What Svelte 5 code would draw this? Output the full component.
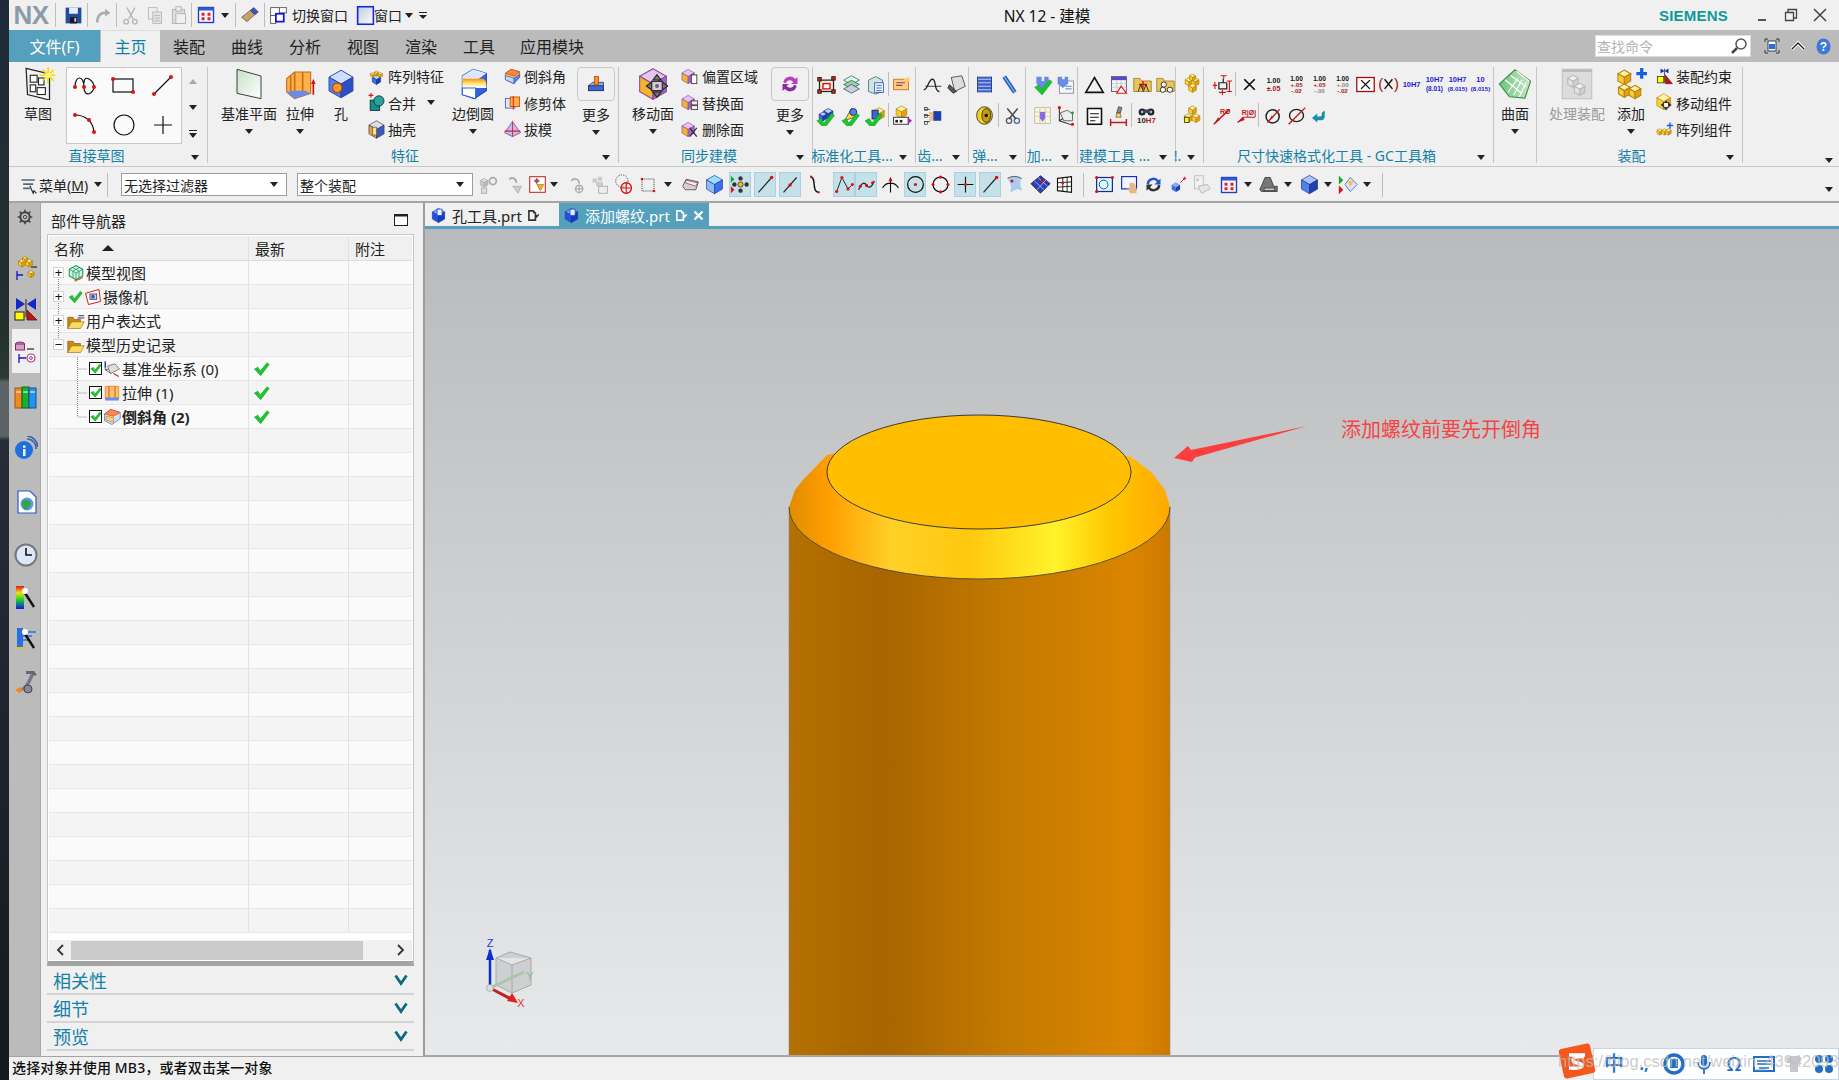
<script>
	// small svg builders for the NX icon set
	const poly = (p, f, s = 'none', w = 0.8) => `<polygon points="${p}" fill="${f}" stroke="${s}" stroke-width="${w}"/>`;
	const line = (d, s = '#111', w = 1.4) => `<path d="${d}" fill="none" stroke="${s}" stroke-width="${w}"/>`;
	const fill = (d, f) => `<path d="${d}" fill="${f}"/>`;
	const rect = (x, y, w, h, f, s = 'none', sw = 1) => `<rect x="${x}" y="${y}" width="${w}" height="${h}" fill="${f}" stroke="${s}" stroke-width="${sw}"/>`;
	const circ = (x, y, r, f, s = 'none', sw = 1) => `<circle cx="${x}" cy="${y}" r="${r}" fill="${f}" stroke="${s}" stroke-width="${sw}"/>`;
	const txt = (x, y, t, f, sz = 7, b = 700) => `<text x="${x}" y="${y}" fill="${f}" font-size="${sz}" font-weight="${b}" text-anchor="middle" font-family="Liberation Sans, sans-serif">${t}</text>`;
	const cube = (x, y, s, t, l, r, st = 'none') => {
		const a = s * 0.87, h = s / 2;
		return poly(`${x},${y - s} ${x + a},${y - h} ${x},${y} ${x - a},${y - h}`, t, st) +
			poly(`${x - a},${y - h} ${x},${y} ${x},${y + s} ${x - a},${y + h}`, l, st) +
			poly(`${x + a},${y - h} ${x},${y} ${x},${y + s} ${x + a},${y + h}`, r, st);
	};
	const yel = (x, y, s) => cube(x, y, s, '#fff2a8', '#f7cf35', '#dfa11a', '#b8860b');
	const blu = (x, y, s) => cube(x, y, s, '#bcd0ff', '#3f6fe8', '#1f3fae', '#1a2f8a');
	const pur = (x, y, s) => cube(x, y, s, '#e4c6ea', '#f5b52a', '#a565c0', '#8a4aa5');
	const chk = (x = 0, y = 0) => `<g transform="translate(${x} ${y})">${poly('3,12 8,9.500 11,14.500 20,3.500 23,6 11.500,21', '#1ec42e', '#109a22', 0.6)}</g>`;
	const dot = (x, y, r = 1.8) => circ(x, y, r, '#d81212');

	const icons = {
		sketch: poly('3,1 20,5 20,24 4,20', '#f2f2f2', '#222', 0.9) + rect(6, 6, 5, 5, '#fff', '#222', 0.8) + rect(6, 13, 4, 5, '#fff', '#222', 0.8) + rect(11, 15, 6, 5, '#fff', '#222', 0.8) + rect(12, 8, 4, 5, '#fff', '#222', 0.8) + line('M19 0v12M13 6h11M15 2l8 8M23 2l-8 8', '#f4d800', 1.2) + circ(19, 6, 2.2, '#fff46a'),
		save: rect(3, 3, 18, 18, '#234a9c') + rect(7, 3, 10, 7, '#e8eef8') + rect(8, 14, 8, 7, '#1a1a1a') + rect(13, 15, 2, 4, '#ddd'),
		undo: line('M6 20c0-8 4-12 11-11', '#a9adb0', 3) + poly('15,4 21,9 15,13', '#a9adb0'),
		cut: line('M8 3l7 13M17 3l-7 13', '#b3b6b8', 1.6) + circ(7, 19, 2.6, 'none', '#b3b6b8', 1.6) + circ(17, 19, 2.6, 'none', '#b3b6b8', 1.6),
		copy: rect(5, 3, 10, 13, '#eee', '#b3b6b8') + rect(10, 8, 10, 13, '#e2e2e2', '#b3b6b8') + line('M12 12h6M12 15h6M12 18h6', '#b3b6b8', 1),
		paste: rect(5, 5, 14, 16, '#ddd', '#aeb1b3') + rect(9, 2, 6, 5, '#eee', '#aeb1b3') + rect(9, 10, 11, 11, '#f0f0f0', '#aeb1b3'),
		grid: rect(2, 2, 20, 20, '#f5f8ff', '#1e3cc8', 1.8) + rect(2, 2, 20, 4, '#2f56d8') + rect(6, 9, 4, 4, '#e52222') + rect(14, 9, 4, 4, '#e52222') + rect(6, 15, 4, 4, '#e52222') + rect(14, 15, 4, 4, '#e52222'),
		brush: poly('3,14 13,6 18,11 9,19', '#caa06a', '#555') + poly('13,6 17,3 22,8 18,11', '#3a55c8', '#334'),
		sw: rect(3, 3, 10, 9, '#fff', '#555') + rect(13, 3, 8, 6, '#fff', '#555') + rect(3, 12, 6, 9, '#fff', '#555') + rect(9, 10, 9, 9, '#fff', '#1414d8', 2),
		win: `<defs><linearGradient id="wg" x2="1" y2="1"><stop offset="0" stop-color="#bcd"/><stop offset="1" stop-color="#fff"/></linearGradient></defs>` + rect(3, 2, 18, 20, 'url(#wg)', '#1428d8', 1.8),
		plane: `<defs><linearGradient id="pg" x2="1" y2="1"><stop offset="0" stop-color="#c6e2c6"/><stop offset="1" stop-color="#fff"/></linearGradient></defs>` + poly('3,1 21,6 21,23 3,19', 'url(#pg)', '#333', 0.7),
		extrude: poly('2,8 8,3 20,3 20,19 8,23 2,18', '#ffb24a', '#c26a10') + line('M8 3v20M14 3v18M5 6v15', '#d06a10', 1.2) + poly('2,18 8,23 20,19 16,17 6,17', '#6a8ce8') + line('M22 20v-9', '#d81212', 1.3) + poly('20.3,12 22,8 23.7,12', '#d81212'),
		hole: cube(12, 12, 11, '#cfe0ff', '#4f82f0', '#2a50c8', '#2a4ab0') + circ(9, 15, 3.8, '#ff9d1e', '#c23c10'),
		pattern: blu(12, 16, 6) + yel(7, 10, 3) + yel(12, 8, 3) + yel(17, 10, 3),
		unite: rect(4, 9, 12, 13, '#14908c', '#123') + circ(15, 10, 6.5, '#2aa29a', '#123') + line('M2 3h6M5 0v6', '#d81212', 1.4),
		shell: cube(12, 12, 11, '#dde', '#e8a040', '#3a5ac0', '#335') + rect(7, 9, 5, 10, '#f4e0a0', '#8a5a20'),
		blend: `<defs><linearGradient id="bg" y2="1" x2="0"><stop offset="0" stop-color="#ff8c00"/><stop offset=".5" stop-color="#ffe27a"/><stop offset="1" stop-color="#fff"/></linearGradient></defs>` + poly('4,6 12,1 22,4 22,17 13,23 4,20', '#2f62e0', '#1f3fae') + poly('4,6 12,1 22,4 14,10 4,10', '#dce6ff') + fill('M4 8h15c2 0 3 2 3 5v2H4z', 'url(#bg)') + poly('4,15 14,15 14,23 4,20', '#fff', '#2f62e0'),
		chamfer: poly('3,8 10,3 21,6 21,13 13,21 3,16', '#f0c060', '#c23c10') + poly('3,8 10,3 21,6 14,11', '#ff8a3c', '#c23c10') + poly('3,11 14,14 14,21 3,16', '#bcd8ff', '#2a50c8') + poly('14,14 21,9 21,13 14,21', '#5f86e8', '#2a50c8'),
		trim: rect(3, 7, 12, 12, '#dfe8ff', '#3a55c8') + rect(9, 5, 12, 12, '#ffb040', '#c23c10') + line('M13 4v17', '#d81212', 1.2),
		draft: poly('12,2 22,16 12,21 2,16', '#c7b6e8', '#5a2ca0') + line('M2 14h20', '#d81212', 1.4) + line('M12 2v19', '#d81212', 1),
		more: rect(3, 14, 18, 6, '#3a68d8', '#224') + poly('3,14 8,10 21,10 21,14', '#8aa8f0', '#224') + rect(10, 3, 5, 10, '#ff8c1e', '#a85010'),
		move: pur(12, 12, 11.5) + poly('15,5 12,9 18,9', '#777', '#222') + poly('15,22 12,18 18,18', '#777', '#222') + poly('7,13.5 11,10.5 11,16.5', '#777', '#222') + poly('23,13.5 19,10.5 19,16.5', '#777', '#222') + rect(11, 10, 8, 7, '#d0d0d0', '#333') + circ(15, 13.5, 1.5, '#8a4aa5'),
		offset: pur(9, 12, 9) + rect(13, 10, 7, 11, '#fff', '#222'),
		replace: pur(9, 12, 9) + rect(13, 10, 8, 5, '#eee', '#333') + rect(13, 16, 8, 5, '#eee', '#333'),
		del: pur(9, 12, 9) + line('M11 10l9 11M20 10l-9 11', '#333', 1.6),
		sync: fill('M4 10a8 8 0 0 1 14-4l3-2v8h-8l3-2a5 5 0 0 0-9 1z', '#b53fc0') + fill('M20 14a8 8 0 0 1-14 4l-3 2v-8h8l-3 2a5 5 0 0 0 9-1z', '#8a2ca0'),
		std1: rect(4, 7, 16, 13, '#fbe6d0', '#222', 1.4) + rect(8, 11, 8, 6, '#fff', '#d81212', 1.6) + rect(2, 4, 4, 4, '#c21', '#222') + rect(18, 3, 4, 4, '#c21', '#222') + rect(2, 18, 4, 4, '#c21', '#222') + rect(18, 18, 4, 4, '#c21', '#222'),
		std2: poly('12,2 21,7 12,12 3,7', '#dfe', '#255') + poly('12,7 21,12 12,17 3,12', '#9ca', '#255') + poly('12,12 21,17 12,22 3,17', '#ccd', '#255'),
		std3: poly('12,3 20,7 20,20 12,23 4,20 4,7', '#cfe6e0', '#2a5a5a') + rect(11, 10, 10, 11, '#f0f6ff', '#2a5ac0') + line('M13 13h6M13 16h6M13 19h6', '#2a5ac0', 1),
		std4: rect(3, 6, 17, 12, '#fc8', '#c87010') + line('M6 10h10M6 13h7', '#844', 1.2) + poly('14,6 21,3 21,9', '#ffd060'),
		std5: blu(14, 10, 6) + blu(8, 13, 5) + chk(-2, 6),
		std6: poly('4,18 12,4 20,12', '#ffd84a', '#333') + circ(14, 8, 4, '#4f82f0', '#224') + chk(-2, 6),
		std7: yel(16, 10, 7) + rect(8, 6, 7, 10, '#3a68d8', '#224') + chk(-3, 6),
		std8: yel(12, 8, 7) + rect(3, 14, 17, 8, '#fff', '#222') + rect(5, 17, 3, 3, '#222') + rect(10, 17, 3, 3, '#222') + poly('19,14 24,18 19,22', '#a020c0'),
		g1: line('M2 18c5 0 5-12 10-12s1 14 8 14', '#222', 1.5) + line('M4 14h18', '#222', 1),
		g2: poly('6,4 18,2 22,14 10,20', '#ddd', '#222') + poly('4,12 12,20 8,22 2,16', '#556', '#222'),
		g3: rect(3, 3, 3, 3, '#fff', '#333', 0.8) + rect(3, 11, 3, 3, '#fff', '#333', 0.8) + rect(3, 19, 3, 3, '#fff', '#333', 0.8) + line('M3 5h6M3 12h6M3 19h6', '#333', 1) + fill('M8 8h9c3 0 4 2 4 5s-2 5-5 5h-8z', '#f0c090') + rect(13, 7, 9, 11, '#1f3fae'),
		s1: rect(4, 3, 16, 18, '#4060c8') + line('M4 6h16M4 10h16M4 14h16M4 18h16', '#cfe0ff', 1) + line('M4 3v18M20 3v18', '#203080', 1),
		s2: line('M6 3l12 18', '#1f5fc0', 5) + line('M6 3l12 18', '#8ab0ee', 1.4),
		s3: `<ellipse cx="12" cy="12" rx="9" ry="10" fill="#f0d020" stroke="#332"/>` + `<ellipse cx="14" cy="12" rx="5" ry="8" fill="#c89c10" stroke="#332"/>` + circ(14, 12, 2, '#111'),
		s4: circ(8, 18, 3, 'none', '#556', 1.5) + circ(17, 18, 3, 'none', '#4868a8', 1.5) + line('M6 4l10 12M18 4L8 16', '#444', 1.6),
		a1: poly('5,3 11,3 11,8 14,8 14,3 19,3 19,11 12,18 5,11', '#6a8ce8') + chk(0, 3),
		a2: rect(5, 8, 16, 14, '#f6f8ff', '#889') + poly('3,3 8,3 8,6 11,6 11,3 15,3 15,11 9,16 3,11', '#6a8ce8') + line('M12 14h7M12 17h7', '#4868a8', 1),
		a3: rect(3, 3, 18, 18, '#fbf4d8', '#bba') + line('M3 8h18M3 13h18M9 3v18M15 3v18', '#ccb', 1) + poly('9,8 15,8 15,15 12,19 9,15', '#8a6ae0'),
		a4: line('M5 2v16l15 5M5 18l15-9', '#333', 1.2) + poly('6,9 14,6 20,10 20,18 10,18', '#eee', '#333') + dot(5, 3) + circ(20, 9, 1.5, '#1a1') + dot(20, 22),
		tri: poly('12,4 22,21 2,21', 'none', '#111', 1.8),
		tbl: rect(4, 3, 17, 17, '#f4f4fa', '#555') + rect(4, 3, 17, 4, '#5a4ac8') + line('M4 11h17M4 15h17M10 7v13M15 7v13', '#bbb', .8) + poly('15,14 21,22 10,22', '#fff', '#d81212', 1.4),
		fld1: poly('2,5 9,5 11,8 22,8 22,20 2,20', '#e8c55a', '#8a6a10') + line('M8 12h9M12.5 8v9', '#d81212', 1.6) + line('M7 20l3-8 3 8 3-8 3 8', '#222', 1),
		fld2: poly('2,5 9,5 11,8 22,8 22,20 2,20', '#e8c55a', '#8a6a10') + circ(10, 12, 3, '#fff', '#222') + circ(9, 18, 3, '#fff', '#222') + circ(17, 18, 3, '#fff', '#222'),
		note: rect(4, 4, 16, 18, '#fff', '#111', 1.8) + line('M7 10h10M7 14h10M7 18h6', '#111', 1.3),
		ruler: line('M3 20h18M3 16v8M21 16v8', '#c01818', 1.6) + poly('9,14 15,14 14,9 10,9', '#ffcf4a', '#664') + poly('10,9 14,9 16,3 12,2', '#889', '#334'),
		bino: circ(7, 8, 4, '#222') + circ(17, 8, 4, '#222') + rect(9, 5, 6, 4, '#444') + circ(7, 8, 1.6, '#8ab0ee') + circ(17, 8, 1.6, '#8ab0ee') + txt(12, 21, '10<tspan fill="#c01818">H7</tspan>', '#222', 9),
		stack: yel(8, 9, 5) + yel(15, 9, 5) + yel(12, 16, 5) + yel(12, 4, 4),
		stack2: yel(12, 6, 5) + yel(7, 15, 5) + yel(16, 15, 5) + rect(3, 14, 5, 6, '#ff0', '#333'),
		dim0: line('M14 5v5h4M14 10h-5v7h9v-7', '#222', 1.4) + line('M2 13h5M4.5 9v8M21 8v12M18 8h6M18 20h6M11 2h7M14.5 2v3M9 21h8M13 18v6', '#d01818', 1.3),
		x: line('M6 6l12 12M18 6L6 18', '#111', 2),
		v1: txt(12, 10, '1.00', '#111', 8) + txt(12, 19, '±.05', '#a81818', 8),
		v2: txt(12, 8, '1.00', '#111', 7.5) + txt(12, 15, '+.05', '#a81818', 7) + txt(12, 22, '-.02', '#a81818', 7),
		v3: txt(12, 8, '1.00', '#111', 7.5) + txt(12, 15, '+.05', '#a81818', 7) + txt(12, 22, '-.00', '#888', 7),
		v4: txt(12, 8, '1.00', '#111', 7.5) + txt(12, 15, '+.00', '#888', 7) + txt(12, 22, '-.02', '#a81818', 7),
		xbox: rect(2, 4, 20, 16, '#fff', '#a01010', 1.5) + line('M7 7l10 10M17 7L7 17', '#111', 1.6),
		xpar: txt(3, 17, '(', '#a01010', 17, 400) + txt(21, 17, ')', '#a01010', 17, 400) + line('M7.5 6l9 11M16.5 6l-9 11', '#111', 1.6),
		h1: txt(12, 15, '10H7', '#1c1cd0', 8.5),
		h2: txt(12, 9, '10H7', '#1c1cd0', 8.5) + txt(12, 19, '(8.01)', '#1c1cd0', 7.5),
		h3: txt(12, 9, '10H7', '#1c1cd0', 8.5) + txt(12, 19, '(8.015)', '#1c1cd0', 7),
		h4: txt(12, 9, '10', '#1c1cd0', 8.5) + txt(12, 19, '(8.015)', '#1c1cd0', 7),
		d1: line('M2 22L20 5', '#c01818', 1.6) + txt(15, 10, 'R&#216;', '#c01818', 8) + poly('2,22 9,17 7,14', '#c01818'),
		d2: line('M3 20L10 14H23', '#c01818', 1.3) + poly('3,20 9,13 11,17', '#c01818') + txt(16, 11, 'R|&#216;|', '#c01818', 8),
		d3: circ(11, 13, 7.5, 'none', '#222', 1.7) + line('M5 20L19 5', '#c01818', 1.6) + poly('7,18 12,14 10,12', '#c01818'),
		d4: `<ellipse cx="12" cy="12" rx="8" ry="7" fill="none" stroke="#222" stroke-width="1.6"/>` + line('M3 22L22 3', '#c01818', 1.6),
		back: fill('M21 6v8c0 3-2 5-5 5h-5v3l-7-6 7-6v4h4c1 0 2-1 2-2V9z', '#1790a8'),
		surf: `<defs><linearGradient id="sg" x2="1"><stop offset="0" stop-color="#6cc67c"/><stop offset="1" stop-color="#c8e6c8"/></linearGradient></defs>` + poly('1,12 12,2 23,10 19,22 8,21', 'url(#sg)', '#478a50') + line('M5 9l11 9M9 6l11 8M13 3l9 7M7 18l7-10M11 20l6-11M15 21l5-10', '#fff', .8),
		proc: rect(1, 1, 22, 22, '#dcdcdc', '#c8c8c8') + rect(1, 1, 22, 2, '#bbb') + cube(9, 10, 4.5, '#f2f2f2', '#e4e4e4', '#cfcfcf', '#bbb') + cube(14, 16, 4.5, '#f2f2f2', '#e4e4e4', '#cfcfcf', '#bbb'),
		add: yel(7, 7, 5.5) + yel(7, 17, 5) + yel(15, 18, 5) + rect(16, 3, 8, 2.4, '#1460e0') + rect(18.8, 0, 2.4, 8, '#1460e0'),
		cons: rect(3, 12, 8, 8, '#ff0', '#333') + poly('13,21 22,21 13,10', '#b81818', '#611') + poly('7,2 12,5 7,8', '#1428c8') + poly('17,2 12,5 17,8', '#1428c8') + line('M12 2v18', '#333', 1),
		mvc: yel(11, 11, 10) + poly('14,9 11,13 17,13', '#333') + poly('14,22 11,18 17,18', '#333') + rect(11, 12, 6, 6, '#fff', '#222') + poly('7,15 11,12 11,18', '#333') + poly('21,15 17,12 17,18', '#333'),
		arr: yel(6, 15, 4) + yel(12, 15, 4) + yel(17, 15, 4) + line('M15 7h8M19 3v8', '#1460e0', 1.8),
		menu: line('M3 6h16M5 11h12M5 16h8', '#567', 2) + line('M13 13l4 9 1-3 3 3', '#222', 1.3),
		f1: cube(7, 10, 5, '#ddd', '#ccc', '#bbb', '#aaa') + circ(17, 8, 4, 'none', '#aaa', 2) + rect(4, 16, 6, 6, '#ddd', '#aaa'),
		f2: line('M6 6c3-3 8-1 8 4', '#aaa', 2.4) + poly('10,14 20,14 16,22', '#ccc', '#aaa'),
		f3: rect(1, 1, 22, 22, '#fff', '#c01818', 1.4) + line('M7 7h8M11 3v8', '#333', 1.2) + circ(11, 7, 2.4, 'none', '#d81212') + poly('11,12 21,12 16,21', '#f0b020', '#a06a10'),
		f4: line('M6 8c2-4 9-3 9 3', '#aaa', 1.8) + circ(15, 17, 4, 'none', '#aaa', 1.3) + line('M10 17h10M15 12v10', '#aaa', 1.2),
		f5: rect(4, 5, 5, 5, '#ccc') + rect(10, 3, 5, 5, '#ccc') + rect(8, 9, 8, 5, '#ccc') + rect(11, 14, 10, 8, '#eee', '#aaa'),
		f6: `<circle cx="9" cy="8" r="7" fill="none" stroke="#333" stroke-dasharray="1.4 1.4"/>` + circ(14, 16, 6, 'none', '#d81212', 1.5) + line('M8 16h12M14 10v12', '#d81212', 1.2),
		f7: `<rect x="4" y="4" width="16" height="16" fill="none" stroke="#222" stroke-dasharray="1.6 1.2"/>` + dot(4, 4) + dot(20, 20),
		t1: poly('3,14 7,6 21,9 18,18 6,18', '#cfd2d8', '#333') + poly('7,7 20,10 18,14 6,10', '#eee', '#a33'),
		t2: cube(12, 12, 10.5, '#9ce0ff', '#90bcf4', '#3f6fe8', '#1f3fae'),
		t3: circ(12, 12, 3, '#f0c020', '#533') + circ(12, 5, 2.5, '#333') + circ(12, 19, 2.5, '#333') + circ(5, 12, 2.5, '#333') + circ(19, 12, 2.5, '#333') + poly('1,2 5,6 1,10', '#18a030') + poly('1,14 5,18 1,22', '#d81212'),
		t4: line('M4 21L19 4', '#222', 1.3) + dot(19, 4, 2),
		t5: line('M4 21L19 4', '#222', 1.3) + dot(11.5, 12.5, 2),
		t6: line('M7 3c8 0 1 18 10 18', '#111', 1.6) + dot(8, 3, 1.2) + dot(17, 21, 1.2),
		t7: line('M3 20L9 4l7 13 5-5', '#222', 1.1) + dot(3, 20) + dot(9, 4) + dot(16, 17) + dot(21, 12),
		t8: line('M3 18c4-10 7-8 9-5s5 4 9-5', '#222', 1.4) + dot(5, 14) + dot(12, 13) + dot(19, 10),
		t9: line('M3 16a10 10 0 0 1 18 0M12 4v17', '#111', 1.3) + dot(12, 7),
		t10: circ(12, 12, 9, 'none', '#111', 1.4) + dot(12, 12),
		t11: circ(12, 12, 8.5, 'none', '#111', 1.4) + dot(12, 3.5) + dot(12, 20.5) + dot(3.5, 12) + dot(20.5, 12),
		t12: line('M3 12h18M12 3v18', '#111', 1.3) + dot(12, 12),
		t13: fill('M4 5c6-3 10-3 16 0-2 5-2 8 1 14l-6-2-8 4c2-6 1-11-3-16z', '#a8cdf0') + dot(9, 8) + line('M4 5c6-3 10-3 16 0', '#345', 1),
		t14: poly('12,2 23,11 12,22 1,11', '#2a3fb8', '#112') + line('M5 8l11 10M9 4l11 10M18 7L8 18', '#cde', .8) + dot(14, 8),
		t15: poly('4,5 20,3 20,21 4,19', '#fff', '#111', 1.3) + line('M10 4v16M15 4v16M4 10l16-1M4 15l16-1', '#111', 1) + dot(10, 10),
		v10: rect(3, 4, 18, 16, '#dff', '#1428a8', 1.4) + circ(11, 12, 5, 'none', '#1428a8') + dot(3, 20) + dot(21, 4) + dot(3, 4),
		v11: rect(3, 3, 17, 14, '#f0f4ff', '#1428a8', 1.3) + fill('M12 10h5l3 6v6h-7l-4-6 3 1z', '#e8b888'),
		v12: fill('M4 11a8 8 0 0 1 14-4l2-2v7h-7l3-3a5 5 0 0 0-9 3z', '#1f55d0') + fill('M20 13a8 8 0 0 1-14 4l-2 2v-7h7l-3 3a5 5 0 0 0 9-3z', '#333'),
		v13: cube(9, 15, 5.5, '#8aa8f0', '#3f6fe8', '#1f3fae') + line('M14 10l5-5', '#d81212', 1.1) + line('M19 3v4M17 5h4', '#d81212', 1),
		v14: rect(4, 2, 10, 15, '#f2f2f2', '#bbb') + rect(6, 5, 3, 3, '#ccc') + poly('8,14 19,12 22,17 12,22', '#e6e6e6', '#aaa'),
		v15: poly('2,18 8,4 14,4 18,14 22,14 22,20 4,20', '#777', '#222') + rect(7, 16, 12, 3, '#ccc', '#444'),
		v16: cube(12, 12, 10.5, '#a8c4ff', '#4f82f0', '#2440b0', '#22358a'),
		v17: poly('1,2 6,7 1,12', '#18a030') + poly('1,13 6,18 1,23', '#d81212') + poly('14,4 22,12 14,20 8,12', '#d8e4ff', '#2a50c8') + poly('11,8 18,8 14,15', '#ffbf40'),
		part: cube(12, 12, 10, '#7ea4ff', '#2450e8', '#123fc0', '#0f2c98') + rect(10, 3, 7, 9, '#eef', '#1540c8'),
		doc: fill('M2 2h10l5 5v15H2zM5 5v14h9V8H11V5zM15 12l7-3v3l-5 5h-2z', '#333'),
		gear: circ(12, 12, 7, 'none', '#444', 3) + circ(12, 12, 2.5, 'none', '#444', 1.4) + `<path d="M12 1v4M12 19v4M1 12h4M19 12h4M4 4l3 3M17 17l3 3M20 4l-3 3M7 17l-3 3" stroke="#444" stroke-width="2.4"/>`,
		lasm: yel(8, 7, 4) + yel(15, 7, 4) + yel(11, 3.5, 3) + line('M3 15v9M3 19h6', '#1414c8', 1.3) + line('M17 11h6', '#222', 1.2) + yel(17, 18, 3.5),
		lcons: poly('2,1 11,7 2,13', '#1428c8') + poly('22,1 13,7 22,13', '#1428c8') + rect(1, 15, 9, 8, '#ff0', '#222') + poly('13,23 23,23 13,13', '#b81818', '#611') + line('M12 2v18', '#222', 1),
		lpart: `<ellipse cx="6" cy="5" rx="4.5" ry="2" fill="#d8a0c8" stroke="#802a60"/>` + rect(1.5, 5, 9, 6, '#d8a0c8', '#802a60') + line('M5 15v9M5 19h7', '#1414c8', 1.3) + line('M13 10h7', '#222', 1.2) + circ(17, 19, 4, '#fff', '#a03a80', 1.2) + circ(17, 19, 1.4, 'none', '#a03a80', 1),
		books: rect(1, 3, 7, 20, '#f08a1e', '#a85010') + rect(8, 2, 7, 21, '#18b030', '#0a6a18') + rect(15, 3, 7, 20, '#2a90e8', '#1050a0') + line('M2 7h5M9 7h5M16 7h5', '#fff', 1),
		info: circ(10, 14, 9, '#1f6fe0') + rect(9, 13, 2.5, 7, '#fff') + rect(9, 9.5, 2.5, 2.2, '#fff') + line('M13 3a9 9 0 0 1 9 10M13 0a12 12 0 0 1 11 11', '#3a66b8', 1.7),
		page: poly('4,1 16,1 22,7 22,23 4,23', '#fff', '#2a5ac8', 1.2) + circ(13, 14, 6.5, '#5a9ae8') + fill('M8 11c3-2 7-2 9 2-1 4-3 6-5 7-3-1-4-5-4-9z', '#3aa04a'),
		clock: circ(12, 12, 10.5, '#dce8fa', '#777', 2) + line('M12 5v7h6', '#111', 1.6),
		wand: `<defs><linearGradient id="rb" y2="1" x2="0"><stop offset="0" stop-color="#e01818"/><stop offset=".3" stop-color="#f0e010"/><stop offset=".6" stop-color="#18d030"/><stop offset="1" stop-color="#1018e0"/></linearGradient></defs>` + rect(2, 1, 8, 23, 'url(#rb)') + line('M11 8l9 14', '#111', 2.4) + circ(11, 6, 3, '#fff'),
		wand2: rect(3, 2, 6, 19, '#2a70e0') + line('M9 6h13M9 10h9M9 14h5', '#2a70e0', 1.6) + line('M11 8l9 14', '#111', 2.4) + circ(11, 6, 3, '#fff') + rect(1, 21, 10, 1.6, '#e8c020'),
		wrench: line('M5 21c6-2 9-6 13-16', '#778', 3.4) + fill('M12 1h8l3 4-4 1-2-2h-5z', '#667') + circ(14, 19, 4, '#889', '#445') + fill('M1 20l5-3 3 3-4 3z', '#f08a1e'),
		fold: poly('1,7 8,7 10,10 18,10 18,13 6,13 1,22', '#c88a10', '#7a5208') + poly('6,13 23,13 18,22 1,22', '#ffd860', '#8a6a10'),
		folde: poly('1,7 8,7 10,10 18,10 18,13 6,13 1,22', '#c88a10', '#7a5208') + poly('6,13 23,13 18,22 1,22', '#ffd860', '#8a6a10') + line('M15 5h8M14 8h9', '#224', 1.2),
		model: poly('12,2 21,7 21,16 12,21 3,16 3,7', '#d8f0e0', '#0c9a5a', 1.4) + line('M3 7l9 5 9-5M12 12v9M7 4.5l9 5v9M17 4.5l-9 5v9', '#0c9a5a', 1) + line('M10 23l11-5', '#e04818', 1.6),
		cam: poly('2,7 20,2 22,18 6,22', '#fff', '#d81212', 1.3) + rect(8, 8, 9, 7, '#d8d8e8', '#223') + circ(12, 11.5, 2.5, '#3a55c8'),
		check: chk(),
		csys: line('M3 2v11M3 13l8 5M3 13l14-3', '#333', 1) + line('M3 2v8', '#1414c8', 1.4) + poly('6,8 16,5 22,12 10,18', '#ddd', '#444') + line('M14 18l7 4', '#d81212', 1.4),
		ext: poly('3,3 21,3 21,20 3,20', '#ffc070', '#d06a10') + line('M8 3v17M16 3v17', '#d06a10', 1.4) + rect(3, 18, 18, 4, '#6a8ce8'),
		cham: poly('2,8 10,2 23,6 23,14 12,22 2,17', '#cfe2ff', '#2a50c8') + poly('2,8 10,2 23,6 14,11', '#ff8a4c', '#c23c10') + poly('4,11 14,13 14,19 4,16', '#f8d080', '#c87010')
	};

	// turns centre positions into margins so rows stay in normal flow
	function place(items, start) {
		let cur = start;
		return items.map((it) => {
			const w = it.w ?? (it.sep ? 1 : it.arrow ? 9 : 22);
			const ml = it.x - w / 2 - cur;
			cur = it.x + w / 2;
			return { ...it, w, ml };
		});
	}

	const topLeft = place([
		{ x: 31, w: 42, nx: true }, { x: 55, sep: 1 }, { x: 73, n: 'save' }, { x: 87, sep: 1 }, { x: 102, n: 'undo' }, { x: 116, sep: 1 },
		{ x: 130, n: 'cut' }, { x: 154, n: 'copy' }, { x: 178, n: 'paste' }, { x: 191, sep: 1 }, { x: 206, n: 'grid', s: 18 }, { x: 225, arrow: 1 },
		{ x: 235, sep: 1 }, { x: 249, n: 'brush' }, { x: 264, sep: 1 }, { x: 278, n: 'sw' }, { x: 320, w: 60, t: '切换窗口' }, { x: 365, n: 'win' },
		{ x: 388, w: 32, t: '窗口' }, { x: 409, arrow: 1 }, { x: 423, ov: 1, w: 9 }, { x: 1047, w: 130, t: 'NX 12 - 建模', c: 1 }
	], 9);
	const tabs = ['装配', '曲线', '分析', '视图', '渲染', '工具', '应用模块'];

	const filterIcons = place([
		{ x: 488, n: 'f1' }, { x: 514, n: 'f2' }, { x: 537, n: 'f3', s: 17 }, { x: 554, arrow: 1 }, { x: 576, n: 'f4' }, { x: 599, n: 'f5' },
		{ x: 624, n: 'f6' }, { x: 648, n: 'f7', s: 18 }, { x: 668, arrow: 1 }, { x: 690, n: 't1' }, { x: 714, n: 't2' }, { x: 740, n: 't3', hl: 1 },
		{ x: 765, n: 't4', hl: 1 }, { x: 790, n: 't5', hl: 1 }, { x: 814, n: 't6' }, { x: 844, n: 't7', hl: 1 }, { x: 866, n: 't8', hl: 1 }, { x: 890, n: 't9' },
		{ x: 915, n: 't10', hl: 1 }, { x: 940, n: 't11' }, { x: 965, n: 't12', hl: 1 }, { x: 990, n: 't4', hl: 1 }, { x: 1014, n: 't13' }, { x: 1040, n: 't14' },
		{ x: 1064, n: 't15' }, { x: 1083, sep: 1 }, { x: 1104, n: 'v10' }, { x: 1129, n: 'v11' }, { x: 1153, n: 'v12' }, { x: 1178, n: 'v13' }, { x: 1201, n: 'v14' },
		{ x: 1229, n: 'grid', s: 18 }, { x: 1248, arrow: 1 }, { x: 1268, n: 'v15' }, { x: 1288, arrow: 1 }, { x: 1309, n: 'v16' }, { x: 1328, arrow: 1 },
		{ x: 1348, n: 'v17' }, { x: 1367, arrow: 1 }, { x: 1382, sep: 1 }
	], 473);

	const colOne = [['pattern', '阵列特征'], ['unite', '合并', true], ['shell', '抽壳']];
	const colTwo = [['chamfer', '倒斜角'], ['trim', '修剪体'], ['draft', '拔模']];
	const colSync = [['offset', '偏置区域'], ['replace', '替换面'], ['del', '删除面']];
	const colAsm = [['cons', '装配约束'], ['mvc', '移动组件'], ['arr', '阵列组件']];

	const iconGroups = [
		{ label: '标准化工具...', w: 103, start: 813, r1: [{ x: 826, n: 'std1' }, { x: 851, n: 'std2' }, { x: 875, n: 'std3' }, { x: 888, sep: 1 }, { x: 901, n: 'std4' }], r2: [{ x: 826, n: 'std5' }, { x: 851, n: 'std6' }, { x: 875, n: 'std7' }, { x: 888, sep: 1 }, { x: 901, n: 'std8' }] },
		{ label: '齿...', w: 53, start: 916, r1: [{ x: 932, n: 'g1' }, { x: 956, n: 'g2' }], r2: [{ x: 932, n: 'g3' }] },
		{ label: '弹...', w: 57, start: 969, r1: [{ x: 984, n: 's1' }, { x: 1009, n: 's2' }], r2: [{ x: 984, n: 's3' }, { x: 998, sep: 1 }, { x: 1012, n: 's4' }] },
		{ label: '加...', w: 52, start: 1026, r1: [{ x: 1042, n: 'a1' }, { x: 1065, n: 'a2' }], r2: [{ x: 1042, n: 'a3' }, { x: 1065, n: 'a4' }] },
		{ label: '建模工具 ...', w: 98, start: 1078, r1: [{ x: 1094, n: 'tri' }, { x: 1118, n: 'tbl' }, { x: 1142, n: 'fld1' }, { x: 1165, n: 'fld2' }], r2: [{ x: 1094, n: 'note' }, { x: 1118, n: 'ruler' }, { x: 1131, sep: 1 }, { x: 1146, n: 'bino' }] },
		{ label: '!.', w: 28, start: 1176, r1: [{ x: 1192, n: 'stack' }], r2: [{ x: 1192, n: 'stack2' }] },
		{
			label: '尺寸快速格式化工具 - GC工具箱', w: 290, start: 1204,
			r1: [{ x: 1221, n: 'dim0' }, { x: 1235, sep: 1 }, { x: 1249, n: 'x' }, { x: 1273, n: 'v1' }, { x: 1296, n: 'v2' }, { x: 1319, n: 'v3' }, { x: 1342, n: 'v4' }, { x: 1365, n: 'xbox' }, { x: 1388, n: 'xpar' }, { x: 1411, n: 'h1' }, { x: 1434, n: 'h2' }, { x: 1457, n: 'h3' }, { x: 1480, n: 'h4' }],
			r2: [{ x: 1222, n: 'd1' }, { x: 1245, n: 'd2' }, { x: 1258, sep: 1 }, { x: 1273, n: 'd3' }, { x: 1296, n: 'd4' }, { x: 1318, n: 'back', s: 18 }]
		}
	];

	const leftIcons = [
		{ n: 'lasm', cls: 'l1' }, { n: 'lcons', cls: 'l2' }, { n: 'lpart', cls: 'l3 on' }, { n: 'books', cls: 'l4' }, { n: 'info', cls: 'l5' },
		{ n: 'page', cls: 'l6' }, { n: 'clock', cls: 'l7' }, { n: 'wand', cls: 'l8' }, { n: 'wand2', cls: 'l9' }, { n: 'wrench', cls: 'l10' }
	];

	const rows = [
		{ exp: '+', n: 'model', t: '模型视图' },
		{ exp: '+', ok: 1, n: 'cam', t: '摄像机' },
		{ exp: '+', n: 'folde', t: '用户表达式' },
		{ exp: '-', n: 'fold', t: '模型历史记录' },
		{ box: 1, n: 'csys', t: '基准坐标系 (0)', latest: 1 },
		{ box: 1, n: 'ext', t: '拉伸 (1)', latest: 1 },
		{ box: 1, n: 'cham', t: '倒斜角 (2)', latest: 1, bold: 1 },
		...Array.from({ length: 21 }, () => ({}))
	];
</script>

{#snippet ic(n, s = 22)}
	<svg class="ic" width={s} height={s} viewBox="0 0 24 24">{@html icons[n]}</svg>
{/snippet}

{#snippet strip(items)}
	{#each items as it}
		<span class="cell" class:hl={it.hl} style="margin-left:{it.ml}px;width:{it.w}px">
			{#if it.sep}<i class="vsep"></i>
			{:else if it.arrow}<i class="tri"></i>
			{:else if it.ov}<i class="overflow"></i>
			{:else if it.nx}<b class="nx">NX</b>
			{:else if it.t}<span class="cell-t" class:center={it.c}>{it.t}</span>
			{:else}{@render ic(it.n, it.s ?? 21)}{/if}
		</span>
	{/each}
{/snippet}

{#snippet big(n, label, arrow = true, w = 46, s = 32, dim = false)}
	<div class="big" class:dim style="width:{w}px">
		<div class="big-ic">{@render ic(n, s)}</div>
		<span class="big-t">{label}</span>
		{#if arrow}<i class="tri"></i>{/if}
	</div>
{/snippet}

{#snippet col(items, w, pad)}
	<div class="col" style="width:{w}px;padding-left:{pad}px">
		{#each items as [n, t, drop]}
			<div class="col-row">
				{@render ic(n, 19)}<span>{t}</span>
				{#if drop}<i class="tri drop"></i>{/if}
			</div>
		{/each}
	</div>
{/snippet}

{#snippet more(n)}
	<div class="big">
		<div class="more-box">{@render ic(n, 20)}</div>
		<span class="big-t">更多</span>
		<i class="tri"></i>
	</div>
{/snippet}

<div class="app">
	<div class="desk"></div>
	<div class="main">
		<header class="titlebar">
			{@render strip(topLeft)}
			<span class="siemens">SIEMENS</span>
			<div class="winbtns">
				<svg width="14" height="14" viewBox="0 0 14 14"><rect x="3" y="11" width="8" height="2" fill="#555" /></svg>
				<svg width="14" height="14" viewBox="0 0 14 14"><path d="M1.5 4.5h8v8h-8zM4 4V1.500h8.500V10H10" fill="none" stroke="#444" stroke-width="1.300" /></svg>
				<svg width="14" height="14" viewBox="0 0 14 14"><path d="M1 1l12 12M13 1L1 13" stroke="#444" stroke-width="1.500" /></svg>
			</div>
		</header>

		<nav class="tabbar">
			<span class="file">文件(F)</span>
			<span class="tab active">主页</span>
			{#each tabs as t}<span class="tab" class:wide={t.length > 2}>{t}</span>{/each}
			<div class="search">
				<span>查找命令</span>
				<svg width="18" height="18" viewBox="0 0 18 18"><circle cx="11" cy="7" r="5" fill="#fff" stroke="#555" stroke-width="1.500" /><path d="M7 11l-5 5" stroke="#444" stroke-width="2.500" /></svg>
			</div>
			<div class="tabbar-ics">
				<svg width="16" height="16" viewBox="0 0 16 16"><path d="M1 4V1h3M12 1h3v3M15 12v3h-3M4 15H1v-3" fill="none" stroke="#333" /><rect x="4" y="3" width="8" height="10" fill="#fff" stroke="#345" /><rect x="5" y="6" width="6" height="5" fill="#2a70d8" /></svg>
				<svg width="14" height="14" viewBox="0 0 14 14"><path d="M1 10l6-6 6 6" fill="none" stroke="#fff" stroke-width="3.600" /><path d="M1 10l6-6 6 6" fill="none" stroke="#222" stroke-width="1.400" /></svg>
				<svg width="15" height="17" viewBox="0 0 15 17"><ellipse cx="7.500" cy="8.500" rx="7" ry="8" fill="#3f78d8" /><text x="7.500" y="13" font-size="12" font-weight="700" fill="#fff" text-anchor="middle" font-family="Liberation Sans, sans-serif">?</text></svg>
			</div>
		</nav>

		<section class="ribbon">
			<div class="grp g-sketch">
				<div class="grp-body">
					{@render big('sketch', '草图', false, 56, 33)}
					<div class="gallery">
						<svg width="116" height="77" viewBox="0 0 116 77">
							<path d="M9 20c0-12 9-12 9 0s10 6 10 0-10-14-10-4" fill="none" stroke="#111" stroke-width="1.200" />
							<rect x="47" y="12" width="20" height="13" fill="none" stroke="#111" stroke-width="1.200" />
							<path d="M88 27l17-17M9 48c10 0 18 6 19 17" fill="none" stroke="#111" stroke-width="1.200" />
							<ellipse cx="58" cy="58" rx="10" ry="10" fill="none" stroke="#111" stroke-width="1.200" />
							<path d="M97 49v18M88 58h18" stroke="#111" stroke-width="1.200" />
							<g fill="#d81212">
								<circle cx="9" cy="20" r="2" /><circle cx="18" cy="20" r="2" /><circle cx="28" cy="20" r="2" />
								<circle cx="47" cy="12" r="2" /><circle cx="67" cy="25" r="2" /><circle cx="88" cy="27" r="2" /><circle cx="105" cy="10" r="2" />
								<circle cx="9" cy="48" r="2" /><circle cx="23" cy="53" r="2" /><circle cx="28" cy="65" r="2" />
							</g>
						</svg>
					</div>
					<div class="scroller">
						<i class="tri up"></i><i class="tri"></i><i class="tri dbl"></i>
					</div>
				</div>
				<div class="grp-foot"><span class="grp-label">直接草图</span><i class="tri"></i></div>
			</div>

			<div class="grp g-feat">
				<div class="grp-body">
					{@render big('plane', '基准平面', true, 66)}
					{@render big('extrude', '拉伸', true, 36)}
					{@render big('hole', '孔', false, 46, 30)}
					{@render col(colOne, 86, 3)}
					{@render big('blend', '边倒圆')}
					{@render col(colTwo, 81, 7)}
					{@render more('more')}
				</div>
				<div class="grp-foot"><span class="grp-label">特征</span><i class="tri"></i></div>
			</div>

			<div class="grp g-sync">
				<div class="grp-body">
					{@render big('move', '移动面')}
					{@render col(colSync, 95, 5)}
					{@render more('sync')}
				</div>
				<div class="grp-foot"><span class="grp-label">同步建模</span><i class="tri"></i></div>
			</div>

			{#each iconGroups as g}
				<div class="grp" style="width:{g.w}px">
					<div class="grp-body icon-body">
						<div class="icon-row">{@render strip(place(g.r1, g.start))}</div>
						<div class="icon-row">{@render strip(place(g.r2, g.start))}</div>
					</div>
					<div class="grp-foot"><span class="grp-label">{g.label}</span><i class="tri"></i></div>
				</div>
			{/each}

			<div class="grp g-surf">
				<div class="grp-body">{@render big('surf', '曲面', true, 42, 34)}</div>
			</div>

			<div class="grp g-asm">
				<div class="grp-body">
					{@render big('proc', '处理装配', false, 64, 32, true)}
					{@render big('add', '添加', true, 44, 32)}
					{@render col(colAsm, 76, 2)}
				</div>
				<div class="grp-foot"><span class="grp-label">装配</span><i class="tri"></i></div>
			</div>
			<i class="tri ribbon-end"></i>
		</section>

		<section class="toolbar">
			<span class="menu-ic">{@render ic('menu', 20)}</span>
			<span class="menu-t">菜单(<u>M</u>)</span>
			<i class="tri"></i>
			<i class="vsep bar-sep"></i>
			<div class="select s1"><span>无选择过滤器</span><i class="tri"></i></div>
			<div class="select s2"><span>整个装配</span><i class="tri"></i></div>
			{@render strip(filterIcons)}
			<i class="tri bar-end"></i>
		</section>

		<div class="work">
			<aside class="rail">
				<span class="gear">{@render ic('gear', 16)}</span>
				{#each leftIcons as l}
					<span class="rail-ic {l.cls}">{@render ic(l.n, 24)}</span>
				{/each}
			</aside>

			<aside class="nav">
				<div class="nav-head">
					<span>部件导航器</span>
					<svg width="14" height="12" viewBox="0 0 14 12"><rect x=".5" y=".5" width="13" height="11" fill="#fff" stroke="#222" /><rect x=".5" y=".5" width="13" height="2" fill="#222" /></svg>
				</div>
				<div class="tree">
					<div class="tree-row head">
						<span class="c1">名称<i class="sort"></i></span><span class="c2">最新</span><span class="c3">附注</span>
					</div>
					<div class="tree-rows">
						{#each rows as r}
							<div class="tree-row" class:b={r.bold}>
								<span class="c1" class:child={r.box}>
									{#if r.exp}<i class="exp">{r.exp === '+' ? '+' : '−'}</i>{/if}
									{#if r.ok}<span class="ok">{@render ic('check', 16)}</span>{/if}
									{#if r.box}<span class="cbox">{@render ic('check', 13)}</span>{/if}
									{#if r.n}{@render ic(r.n, 18)}<span class="lbl">{r.t}</span>{/if}
								</span>
								<span class="c2 latest">{#if r.latest}{@render ic('check', 18)}{/if}</span>
								<span class="c3"></span>
							</div>
						{/each}
						<svg class="tree-lines" width="60" height="170" viewBox="0 0 60 170">
							<path d="M9.500 12V84M28.500 96V156M28.500 108h10M28.500 132h10M28.500 156h10" fill="none" stroke="#888" stroke-dasharray="1 1" />
						</svg>
					</div>
					<div class="hscroll">
						<svg width="10" height="12" viewBox="0 0 10 12"><path d="M8 1L3 6l5 5" fill="none" stroke="#333" stroke-width="1.800" /></svg>
						<div class="thumb"></div>
						<svg width="10" height="12" viewBox="0 0 10 12"><path d="M2 1l5 5-5 5" fill="none" stroke="#333" stroke-width="1.800" /></svg>
					</div>
				</div>
				<div class="panes">
					{#each ['相关性', '细节', '预览'] as p}
						<div class="pane">
							<span>{p}</span>
							<svg width="14" height="12" viewBox="0 0 14 12"><path d="M1.500 1.500L7 9.500l5.500-8" fill="none" stroke="#0b6a80" stroke-width="2.800" /></svg>
						</div>
					{/each}
				</div>
			</aside>

			<div class="doc">
				<div class="doctabs">
					<div class="dt">{@render ic('part', 17)}<span>孔工具.prt</span>{@render ic('doc', 13)}</div>
					<div class="dt cur">
						{@render ic('part', 17)}<span>添加螺纹.prt</span>
						<svg width="13" height="13" viewBox="0 0 24 24"><path d="M2 2h10l5 5v15H2zM5 5v14h9V8H11V5zM15 12l7-3v3l-5 5h-2z" fill="#fff" /></svg>
						<svg width="11" height="11" viewBox="0 0 11 11"><path d="M1.500 1.500l8 8M9.500 1.500l-8 8" stroke="#fff" stroke-width="2.200" /></svg>
					</div>
				</div>
				<div class="view">
					<svg class="scene" viewBox="426 229 1413 827" width="1413" height="827">
						<defs>
							<linearGradient id="cyl" gradientUnits="userSpaceOnUse" x1="790" x2="1171" y1="0" y2="0">
								<stop offset="0" stop-color="#b47000" /><stop offset=".25" stop-color="#a86500" /><stop offset=".55" stop-color="#c27800" /><stop offset=".9" stop-color="#da8500" /><stop offset="1" stop-color="#cc7a00" />
							</linearGradient>
							<linearGradient id="chf" gradientUnits="userSpaceOnUse" x1="790" x2="1171" y1="0" y2="0">
								<stop offset="0" stop-color="#e08c00" /><stop offset=".1" stop-color="#ff9d00" /><stop offset=".27" stop-color="#ffd028" /><stop offset=".47" stop-color="#ffc80e" /><stop offset=".7" stop-color="#fff22a" /><stop offset=".84" stop-color="#ffc800" /><stop offset="1" stop-color="#ffa800" />
							</linearGradient>
						</defs>
						<rect x="790" y="507" width="381" height="549" fill="url(#cyl)" stroke="#8a8a8a" stroke-width=".6" />
						<path d="M790 507L796 490 804 480 828 455 980 420 1132 457 1152 472 1166 490 1171 507A190.500 72 0 0 1 790 507Z" fill="url(#chf)" />
						<path d="M790 507A190.500 72 0 0 0 1171 507" fill="none" stroke="#4a4a3a" stroke-width=".9" />
						<ellipse cx="980" cy="472" rx="152" ry="57" fill="#ffbf00" stroke="#3a3a3a" stroke-width="1" />
						<polygon points="1175,458 1189,446 1192,450 1308,426 1196,457.500 1193,462" fill="#fb3f3f" />
						<text x="1342" y="437" fill="#f64444" font-size="20" font-family="Noto Sans CJK SC, sans-serif">添加螺纹前要先开倒角</text>
						<g>
							<path d="M497 958l14-6 21 6v27l-19 8-16-8zM497 958l16 7 19-7M513 965v28" fill="#c4c6c8" fill-opacity=".7" stroke="#a8aaac" />
							<path d="M491 988L525 972" stroke="#a8c8a8" stroke-width="3" />
							<path d="M491 988v-38" stroke="#0a2fd0" stroke-width="2.500" />
							<polygon points="491,948 487,960 495,960" fill="#0a2fd0" />
							<path d="M491 988L514 1000" stroke="#c02020" stroke-width="3" />
							<polygon points="519,1003 508,1001 513,993" fill="#e02020" />
							<circle cx="491" cy="988" r="3.500" fill="#ddd" stroke="#888" stroke-width=".5" />
							<text x="491" y="947" fill="#2038d8" font-size="11" text-anchor="middle" font-family="Liberation Sans, sans-serif">Z</text>
							<text x="522" y="1007" fill="#d84040" font-size="11" text-anchor="middle" font-family="Liberation Sans, sans-serif">X</text>
							<text x="531" y="980" fill="#8ab88a" font-size="11" text-anchor="middle" font-family="Liberation Sans, sans-serif">Y</text>
						</g>
					</svg>
				</div>
			</div>
		</div>

		<footer class="status">选择对象并使用 MB3，或者双击某一对象</footer>
	</div>

	<!-- input method bar sitting on top of the window -->
	<div class="ime">
		<span class="ime-t">中</span>
		<span class="ime-t small">.,</span>
		<svg width="22" height="22" viewBox="0 0 22 22"><circle cx="11" cy="11" r="9" fill="none" stroke="#1f6fc8" stroke-width="3.500" /><rect x="7" y="6" width="8" height="9" fill="#1f6fc8" /></svg>
		<svg width="16" height="22" viewBox="0 0 16 22"><rect x="5" y="2" width="6" height="11" rx="3" fill="#1f6fc8" /><path d="M2 9c0 9 12 9 12 0M8 16v5" fill="none" stroke="#1f6fc8" stroke-width="1.800" /></svg>
		<span class="ime-t">Ω</span>
		<svg width="22" height="18" viewBox="0 0 22 18"><rect x="1" y="2" width="20" height="14" fill="none" stroke="#1f6fc8" stroke-width="2" /><path d="M4 6h14M4 9h14M6 13h10" stroke="#1f6fc8" stroke-width="1.500" /></svg>
		<svg width="20" height="20" viewBox="0 0 20 20"><path d="M2 4l5-2h6l5 2-2 5h-2v9H6V9H4z" fill="#c4c8cc" /></svg>
		<svg width="20" height="20" viewBox="0 0 20 20"><circle cx="5" cy="5" r="4" fill="#1f6fc8" /><circle cx="15" cy="5" r="4" fill="#1f6fc8" /><circle cx="5" cy="15" r="4" fill="#1f6fc8" /><circle cx="15" cy="15" r="4" fill="#1f6fc8" /></svg>
	</div>
	<div class="sogou">
		<svg width="38" height="38" viewBox="0 0 38 38"><rect x="3" y="4" width="32" height="30" rx="3" fill="#f4581c" transform="rotate(-12 19 19)" /><path d="M11 13h16M26 15c-12-2-14 5-7 6 8 1 8 6-8 5" fill="none" stroke="#fff" stroke-width="3.500" /></svg>
	</div>
	<span class="mark">https://blog.csdn.net/weixin_43942093</span>
</div>

<style>
	:global(body) {
		margin: 0;
		background: #f0f0f0;
	}

	.app {
		position: relative;
		display: flex;
		width: 1839px;
		height: 1080px;
		overflow: hidden;
		font-family: 'Noto Sans', 'Noto Sans CJK SC', sans-serif;
		font-size: 14px;
		color: #222;
	}

	.desk {
		width: 9px;
		flex: none;
		background: linear-gradient(#1e2a38 0, #22302e 330px, #2b3a33 378px, #5b6367 382px, #5b6367 436px, #262d38 440px, #1c222a 800px, #15191d 100%);
	}

	.main {
		flex: 1;
		display: flex;
		flex-direction: column;
		min-width: 0;
		background: #f0f0f0;
	}

	.ic {
		display: block;
		flex: none;
	}

	.cell {
		display: flex;
		align-items: center;
		justify-content: center;
		flex: none;
		height: 24px;
	}

	.cell.hl {
		height: 25px;
		background: #c4e0e8;
		box-shadow: inset 0 0 0 1px #a9d2dd;
	}

	.cell-t {
		white-space: nowrap;
		font-size: 14px;
	}

	.cell-t.center {
		font-size: 15.500px;
		color: #111;
	}

	.vsep {
		display: block;
		width: 1px;
		height: 24px;
		background: #bdbdbd;
	}

	.tri {
		display: block;
		flex: none;
		width: 0;
		height: 0;
		border-left: 4px solid transparent;
		border-right: 4px solid transparent;
		border-top: 5px solid #222;
	}

	.tri.up {
		border-top: 0;
		border-bottom: 5px solid #aaa;
	}

	.tri.dbl {
		position: relative;
		margin-top: 2px;
	}

	.tri.dbl::before {
		content: '';
		position: absolute;
		top: -8px;
		left: -4px;
		width: 8px;
		height: 1px;
		background: #222;
	}

	.overflow {
		display: block;
		width: 8px;
		height: 6px;
		border-top: 1px solid #222;
		position: relative;
	}

	.overflow::after {
		content: '';
		position: absolute;
		top: 2px;
		left: 0;
		border-left: 4px solid transparent;
		border-right: 4px solid transparent;
		border-top: 4px solid #222;
	}

	.titlebar {
		height: 30px;
		display: flex;
		align-items: center;
		flex: none;
	}

	.nx {
		font-family: 'Liberation Sans', sans-serif;
		font-size: 26px;
		font-weight: 700;
		color: #8b9ba8;
		letter-spacing: -.5px;
	}

	.siemens {
		margin-left: 547px;
		font-family: 'Liberation Sans', sans-serif;
		font-weight: 700;
		font-size: 15px;
		color: #0f9a9a;
		letter-spacing: .2px;
	}

	.winbtns {
		margin-left: 27px;
		display: flex;
		gap: 15px;
		align-items: center;
	}

	.tabbar {
		height: 32px;
		flex: none;
		display: flex;
		align-items: stretch;
		background: #bbb;
	}

	.file {
		width: 91px;
		margin-right: 1px;
		background: #55a0bc;
		color: #fff;
		font-size: 16px;
		display: flex;
		align-items: center;
		justify-content: center;
	}

	.tab {
		width: 58px;
		display: flex;
		align-items: center;
		justify-content: center;
		font-size: 16px;
		color: #222;
		white-space: nowrap;
	}

	.tab.active {
		width: 59px;
		background: #f0f0f0;
		color: #0f7fa5;
		box-shadow: inset 0 1px 0 #ddd;
	}

	.tab.wide {
		width: 88px;
	}

	.search {
		margin-left: auto;
		margin-top: 5px;
		width: 156px;
		height: 22px;
		background: #fff;
		border: 1px solid #ddd;
		box-sizing: border-box;
		display: flex;
		align-items: center;
		justify-content: space-between;
		padding: 0 2px 0 1px;
		font-size: 14px;
		color: #b5b5b5;
	}

	.tabbar-ics {
		width: 88px;
		display: flex;
		align-items: center;
		justify-content: flex-end;
		gap: 11px;
		padding-right: 8px;
		box-sizing: border-box;
	}

	.ribbon {
		height: 105px;
		flex: none;
		position: relative;
		display: flex;
		box-sizing: border-box;
		border-bottom: 1px solid #c8c8c8;
		padding-top: 5px;
	}

	.grp {
		flex: none;
		box-sizing: border-box;
		position: relative;
		display: flex;
		flex-direction: column;
		height: 96px;
		border-right: 1px solid #c6c6c6;
	}

	.g-sketch { width: 199px; padding-left: 1px; }
	.g-feat { width: 411px; padding-left: 8px; }
	.g-sync { width: 194px; padding-left: 11px; }
	.g-surf { width: 43px; }
	.g-asm { width: 206px; padding-left: 8px; }

	.grp-body {
		height: 76px;
		display: flex;
		flex: none;
		overflow: visible;
	}

	.icon-body {
		flex-direction: column;
		padding-top: 5px;
		gap: 7px;
		box-sizing: border-box;
	}

	.icon-row {
		display: flex;
		align-items: center;
		height: 24px;
	}

	.grp-foot {
		margin-top: auto;
		margin-bottom: -3px;
		height: 20px;
		padding-right: 24px;
		display: flex;
		align-items: center;
		justify-content: center;
		white-space: nowrap;
	}

	.grp-foot .tri {
		position: absolute;
		right: 8px;
		bottom: 3px;
	}

	.grp-label {
		color: #1481a8;
		font-size: 14px;
		line-height: 20px;
		flex: none;
	}

	.big {
		flex: none;
		display: flex;
		flex-direction: column;
		align-items: center;
		white-space: nowrap;
	}

	.big.dim .big-t {
		color: #9a9a9a;
	}

	.big-ic {
		height: 33px;
		display: flex;
		align-items: center;
	}

	.big-t {
		margin-top: 5px;
		line-height: 18px;
		font-size: 14px;
	}

	.big .tri {
		margin-top: 6px;
	}

	.more-box {
		width: 38px;
		height: 34px;
		box-sizing: border-box;
		border: 1px solid #c8c8c8;
		border-radius: 4px;
		display: flex;
		align-items: center;
		justify-content: center;
	}

	.gallery {
		width: 116px;
		height: 77px;
		box-sizing: border-box;
		background: #fafafa;
		box-shadow: inset 0 0 0 1px #c8c8c8;
		overflow: hidden;
	}

	.gallery svg {
		display: block;
	}

	.scroller {
		width: 22px;
		display: flex;
		flex-direction: column;
		align-items: center;
		gap: 21px;
		padding-top: 12px;
	}

	.col {
		flex: none;
		box-sizing: border-box;
		display: flex;
		flex-direction: column;
		gap: 6.500px;
		margin-top: -1px;
	}

	.col-row {
		display: flex;
		align-items: center;
		gap: 2px;
		height: 20px;
		white-space: nowrap;
		font-size: 14px;
	}

	.col-row .drop {
		margin-left: 9px;
	}

	.ribbon-end {
		position: absolute;
		right: 6px;
		bottom: 3px;
	}

	.toolbar {
		height: 36px;
		flex: none;
		display: flex;
		align-items: center;
		box-sizing: border-box;
		border-bottom: 2px solid #a4a4a4;
		padding-top: 1px;
		position: relative;
	}

	.menu-ic { margin-left: 10px; }
	.menu-t { width: 53px; white-space: nowrap; font-size: 14px; }
	.toolbar > .tri { margin-left: 2px; }
	.bar-sep { margin-left: 5px; }

	.select {
		height: 23px;
		box-sizing: border-box;
		background: #fff;
		border: 1px solid #9c9c9c;
		display: flex;
		align-items: center;
		justify-content: space-between;
		padding: 0 8px 0 2px;
		font-size: 14px;
	}

	.s1 { width: 166px; margin-left: 13px; }
	.s2 { width: 176px; margin-left: 10px; }

	.toolbar .bar-end {
		position: absolute;
		right: 6px;
		bottom: 9px;
	}

	.work {
		flex: 1;
		min-height: 0;
		display: flex;
	}

	.rail {
		position: relative;
		width: 32px;
		flex: none;
		background: #bbb;
		border-right: 1px solid #a8a8a8;
		box-sizing: border-box;
	}

	/* icon rail is a free strip of tool tabs, each one sits on its own height */
	.gear { position: absolute; left: 8px; top: 6px; }
	.rail-ic { position: absolute; left: 5px; }
	.l1 { top: 53px; }
	.l2 { top: 94px; }
	.l3 { top: 137px; }
	.l3.on { left: 3px; top: 126px; width: 28px; height: 44px; background: #f0f0f0; padding: 10px 0 0 2px; box-sizing: border-box; }
	.l4 { top: 182px; }
	.l5 { top: 233px; }
	.l6 { top: 287px; }
	.l7 { top: 340px; }
	.l8 { top: 382px; }
	.l9 { top: 423px; }
	.l10 { top: 467px; }

	.nav {
		width: 384px;
		flex: none;
		box-sizing: border-box;
		padding: 0 9px 0 6px;
		display: flex;
		flex-direction: column;
		border-right: 2px solid #9c9c9c;
	}

	.nav-head {
		height: 31px;
		flex: none;
		display: flex;
		align-items: center;
		justify-content: space-between;
		font-size: 15px;
		padding: 3px 6px 0 4px;
		box-sizing: border-box;
	}

	.tree {
		height: 732px;
		flex: none;
		box-sizing: border-box;
		border: 1px solid #c4c4c4;
		border-bottom: 5px solid #a4a4a4;
		padding: 1px;
		display: flex;
		flex-direction: column;
		background: #fff;
	}

	.tree-rows {
		position: relative;
		flex: 1;
		min-height: 0;
		overflow: hidden;
	}

	.tree-lines {
		position: absolute;
		left: 0;
		top: 0;
		pointer-events: none;
	}

	.tree-row {
		height: 24px;
		box-sizing: border-box;
		display: flex;
		border-bottom: 1px solid #e6e6e6;
		background: #fafafa;
		font-size: 15px;
	}

	.tree-row:nth-child(even) {
		background: #f4f4f4;
	}

	.tree-row.head {
		background: #f0f0f0;
		flex: none;
		height: 25px;
		border-bottom: 1px solid #dcdcdc;
	}

	.tree-row.b {
		font-weight: 700;
	}

	.tree-row span.c1,
	.tree-row span.c2,
	.tree-row span.c3 {
		display: flex;
		align-items: center;
		box-sizing: border-box;
		white-space: nowrap;
	}

	.c1 { width: 200px; padding-left: 5px; border-right: 1px solid #e2e2e2; position: relative; }
	.c2 { width: 100px; padding-left: 6px; border-right: 1px solid #e2e2e2; }
	.c3 { flex: 1; padding-left: 6px; }

	.tree-row span.c1:has(.exp) { padding-left: 4px; }
	.tree-row span.c2.latest { padding-left: 3px; }

	.c1.child { padding-left: 40px; }

	.sort {
		margin-left: 18px;
		border-left: 6px solid transparent;
		border-right: 6px solid transparent;
		border-bottom: 6px solid #222;
	}

	.exp {
		width: 11px;
		height: 11px;
		flex: none;
		box-sizing: border-box;
		border: 1px solid #d4d4d4;
		background: #fff;
		font-style: normal;
		font-size: 13px;
		line-height: 9px;
		text-align: center;
		margin-right: 3px;
		font-family: 'Liberation Sans', sans-serif;
		position: relative;
		z-index: 1;
		color: #111;
	}

	.ok {
		margin: 0 1px 0 0;
	}

	.cbox {
		width: 13px;
		height: 13px;
		flex: none;
		box-sizing: border-box;
		border: 1px solid #111;
		background: #fff;
		margin-right: 1px;
		overflow: hidden;
		display: flex;
		align-items: center;
		justify-content: center;
		position: relative;
		z-index: 1;
	}

	.lbl {
		margin-left: 1px;
	}

	.hscroll {
		height: 20px;
		flex: none;
		display: flex;
		align-items: center;
		background: #f0f0f0;
		padding: 0 6px;
	}

	.thumb {
		width: 292px;
		height: 19px;
		background: #cbcbcb;
		margin: 0 auto 0 6px;
	}

	.panes {
		display: flex;
		flex-direction: column;
		margin-top: 1px;
	}

	.pane {
		height: 28px;
		box-sizing: border-box;
		border-bottom: 2px solid #d4d4d4;
		display: flex;
		align-items: center;
		justify-content: space-between;
		padding: 0 6px;
		font-size: 18px;
		color: #1481a8;
	}

	.doc {
		flex: 1;
		min-width: 0;
		display: flex;
		flex-direction: column;
	}

	.doctabs {
		height: 26px;
		flex: none;
		display: flex;
		box-sizing: border-box;
		border-bottom: 3px solid #55a0bc;
	}

	.dt {
		display: flex;
		align-items: center;
		gap: 5px;
		width: 134px;
		padding-left: 5px;
		padding-bottom: 2px;
		box-sizing: border-box;
		font-size: 15px;
		height: 26px;
		white-space: nowrap;
	}

	.dt.cur {
		width: 150px;
		padding-left: 4px;
		background: #55a0bc;
		color: #fff;
	}

	.view {
		flex: 1;
		min-height: 0;
		background: linear-gradient(#b9babc, #e8e9eb);
		overflow: hidden;
		border-bottom: 1px solid #a8a8a8;
	}

	.scene {
		display: block;
	}

	.status {
		height: 24px;
		flex: none;
		box-sizing: border-box;
		border-top: 1px solid #a4a4a4;
		padding-left: 3px;
		font-size: 14px;
		letter-spacing: .15px;
		line-height: 22px;
		font-weight: 500;
		color: #111;
		background: #f0f0f0;
	}

	.ime {
		position: absolute;
		left: 1593px;
		top: 1048px;
		width: 246px;
		height: 32px;
		box-sizing: border-box;
		background: #fff;
		border: 1px solid #c4d6ea;
		display: grid;
		grid-template-columns: repeat(8, 30px);
		justify-items: center;
		align-items: center;
		padding-left: 5px;
	}

	.ime-t {
		color: #1f6fc8;
		font-size: 20px;
		font-weight: 500;
		line-height: 1;
	}

	.ime-t.small {
		font-size: 16px;
		font-weight: 700;
	}

	.sogou {
		position: absolute;
		left: 1558px;
		top: 1042px;
	}

	.mark {
		position: absolute;
		left: 1558px;
		top: 1052px;
		white-space: nowrap;
		font-family: 'Liberation Sans', sans-serif;
		font-size: 16.500px;
		color: rgba(190, 190, 190, .8);
	}
</style>
